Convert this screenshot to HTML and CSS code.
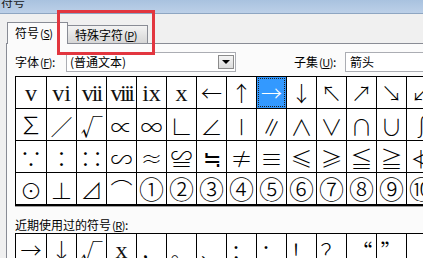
FILE: index.html
```html
<!DOCTYPE html>
<html lang="zh-CN">
<head>
<meta charset="utf-8">
<title>符号</title>
<link rel="stylesheet" href="styles.css">
</head>
<body>
<div class="win">
  <div class="title"><span class="title-text">符号</span></div>
  <div class="tabs">
    <div class="tab tab-active">符号<span class="acc">(<u>S</u>)</span></div>
    <div class="tab tab-idle">特殊字符<span class="acc">(<u>P</u>)</span></div>
  </div>
  <div class="panel">
    <div class="fontrow">
      <div class="lbl lbl-font">字体<span class="acc">(<u>F</u>)</span>:</div>
      <div class="combo">
        <span class="combo-text">(普通文本)</span>
        <span class="combo-btn"><span class="tri"></span></span>
      </div>
      <div class="lbl lbl-sub">子集<span class="acc">(<u>U</u>)</span>:</div>
      <div class="subset">箭头</div>
    </div>
    <div class="grid">
      <div class="c r">v</div>
      <div class="c r">vi</div>
      <div class="c r sq1">vii</div>
      <div class="c r sq2">viii</div>
      <div class="c r">ix</div>
      <div class="c r">x</div>
      <div class="c a">←</div>
      <div class="c a">↑</div>
      <div class="c a sel"><span class="focus">→</span></div>
      <div class="c a">↓</div>
      <div class="c a">↖</div>
      <div class="c a">↗</div>
      <div class="c a">↘</div>
      <div class="c a">↙</div>

      <div class="c big">∑</div>
      <div class="c slash">／</div>
      <div class="c">√</div>
      <div class="c">∝</div>
      <div class="c">∞</div>
      <div class="c">∟</div>
      <div class="c">∠</div>
      <div class="c">∣</div>
      <div class="c">∥</div>
      <div class="c">∧</div>
      <div class="c">∨</div>
      <div class="c">∩</div>
      <div class="c">∪</div>
      <div class="c">∫</div>

      <div class="c">∵</div>
      <div class="c">∶</div>
      <div class="c">∷</div>
      <div class="c">∽</div>
      <div class="c">≈</div>
      <div class="c">≌</div>
      <div class="c">≒</div>
      <div class="c">≠</div>
      <div class="c">≡</div>
      <div class="c">≤</div>
      <div class="c">≥</div>
      <div class="c">≦</div>
      <div class="c">≧</div>
      <div class="c">≮</div>

      <div class="c">⊙</div>
      <div class="c">⊥</div>
      <div class="c">⊿</div>
      <div class="c">⌒</div>
      <div class="c n">①</div>
      <div class="c n">②</div>
      <div class="c n">③</div>
      <div class="c n">④</div>
      <div class="c n">⑤</div>
      <div class="c n">⑥</div>
      <div class="c n">⑦</div>
      <div class="c n">⑧</div>
      <div class="c n">⑨</div>
      <div class="c n">⑩</div>
    </div>
    <div class="lbl lbl-recent">近期使用过的符号<span class="acc">(<u>R</u>)</span>:</div>
    <div class="grid recent">
      <div class="c a">→</div>
      <div class="c a">↓</div>
      <div class="c">√</div>
      <div class="c r">x</div>
      <div class="c">，</div>
      <div class="c">。</div>
      <div class="c">、</div>
      <div class="c">；</div>
      <div class="c">：</div>
      <div class="c">！</div>
      <div class="c">？</div>
      <div class="c">“</div>
      <div class="c">”</div>
      <div class="c"></div>
    </div>
  </div>
  <div class="mark"></div>
</div>
</body>
</html>
```

FILE: styles.css
```css
* { box-sizing: border-box; }
html, body { margin: 0; padding: 0; }
body {
  width: 423px;
  height: 258px;
  overflow: hidden;
  background: #f0f0f0;
  font-family: "Noto Sans CJK SC", "Noto Sans", sans-serif;
  font-size: 12px;
  color: #000;
}
.win { position: relative; width: 423px; height: 258px; overflow: hidden; }

.title {
  height: 14px;
  overflow: hidden;
  background: linear-gradient(#a9c2df, #bcd0e8);
  border-bottom: 1px solid #8ea6c2;
  padding-left: 1px;
}
.title-text {
  display: block;
  margin-top: -6px;
  line-height: 16px;
  font-size: 12px;
  color: #1a1a1a;
}

.tabs {
  height: 29px;
  display: flex;
  align-items: flex-end;
  padding-left: 7px;
}
.tab {
  flex: none;
  display: flex;
  align-items: center;
  font-size: 12px;
  line-height: 14px;
}
.tab-active {
  width: 61px;
  height: 22px;
  margin-bottom: -1px;
  background: #fbfbfb;
  border: 1px solid #898c95;
  border-bottom: none;
  position: relative;
  z-index: 2;
  padding: 0 0 2px 7px;
}
.tab-idle {
  width: 80px;
  height: 18px;
  background: linear-gradient(#f3f3f3, #e4e4e4 50%, #d6d6d6);
  border: 1px solid #898c95;
  border-left: none;
  border-bottom: none;
  padding: 1px 0 0 7px;
}
.acc { font-size: 11px; letter-spacing: -0.5px; margin-left: 1px; }

.panel {
  margin-left: 6px;
  background: #fbfbfb;
  border-top: 1px solid #898c95;
  border-left: 1px solid #898c95;
  padding: 8px 0 0 8px;
  height: 230px;
}

.fontrow {
  height: 20px;
  display: flex;
  align-items: center;
}
.fontrow > * { flex: none; }
.lbl { line-height: 14px; white-space: nowrap; }
.lbl-font { width: 51px; }
.combo {
  width: 170px;
  height: 20px;
  border: 1px solid #abadb3;
  background: #fff;
  display: flex;
  align-items: center;
  justify-content: space-between;
  padding: 0 1px 0 3px;
}
.combo-text { line-height: 14px; }
.combo-btn {
  width: 16px;
  height: 14px;
  border: 1px solid #8b8b8b;
  background: linear-gradient(#f4f4f4, #dcdcdc);
  display: flex;
  align-items: center;
  justify-content: center;
}
.tri {
  width: 0; height: 0;
  border-left: 4px solid transparent;
  border-right: 4px solid transparent;
  border-top: 4px solid #000;
}
.lbl-sub { margin-left: 58px; width: 51px; }
.subset {
  width: 110px;
  height: 20px;
  border: 1px solid #abadb3;
  background: #fff;
  line-height: 18px;
  padding-left: 4px;
}

.grid {
  margin-top: 4px;
  width: max-content;
  display: grid;
  grid-template-columns: 30px repeat(13, 29px);
  grid-auto-rows: 31px;
  gap: 1px;
  background: #000;
  border: 1px solid #000;
  border-bottom-width: 2px;
  box-shadow: 0 1px 0 #a0a0a0;
}
.c {
  background: #fff;
  display: flex;
  align-items: center;
  justify-content: center;
  font-family: "Noto Sans CJK SC", "DejaVu Sans", sans-serif;
  font-weight: 300;
  font-size: 22px;
  line-height: 1;
  overflow: hidden;
}
.r {
  font-family: "Liberation Serif", "DejaVu Serif", serif;
  font-weight: 400;
  font-size: 24px;
  color: #111;
}
.sq1 { letter-spacing: -2px; }
.sq2 { letter-spacing: -2.5px; }
.a { font-size: 21px; }
.n { font-size: 25px; }
.big { font-size: 24px; line-height: 1.2; }
.slash { font-size: 22px; }
.sel { background: #3399ff; color: #fff; padding: 1px; }
.focus {
  width: 100%;
  height: 100%;
  border: 1px dotted #222;
  display: flex;
  align-items: center;
  justify-content: center;
}

.lbl-recent { margin-top: 11px; height: 16px; line-height: 16px; }
.recent {
  margin-top: 0;
  border-bottom: none;
  box-shadow: none;
}

.mark {
  position: absolute;
  left: 57px;
  top: 10px;
  width: 98px;
  height: 45px;
  border: 3px solid #e2363f;
  z-index: 5;
}
```
